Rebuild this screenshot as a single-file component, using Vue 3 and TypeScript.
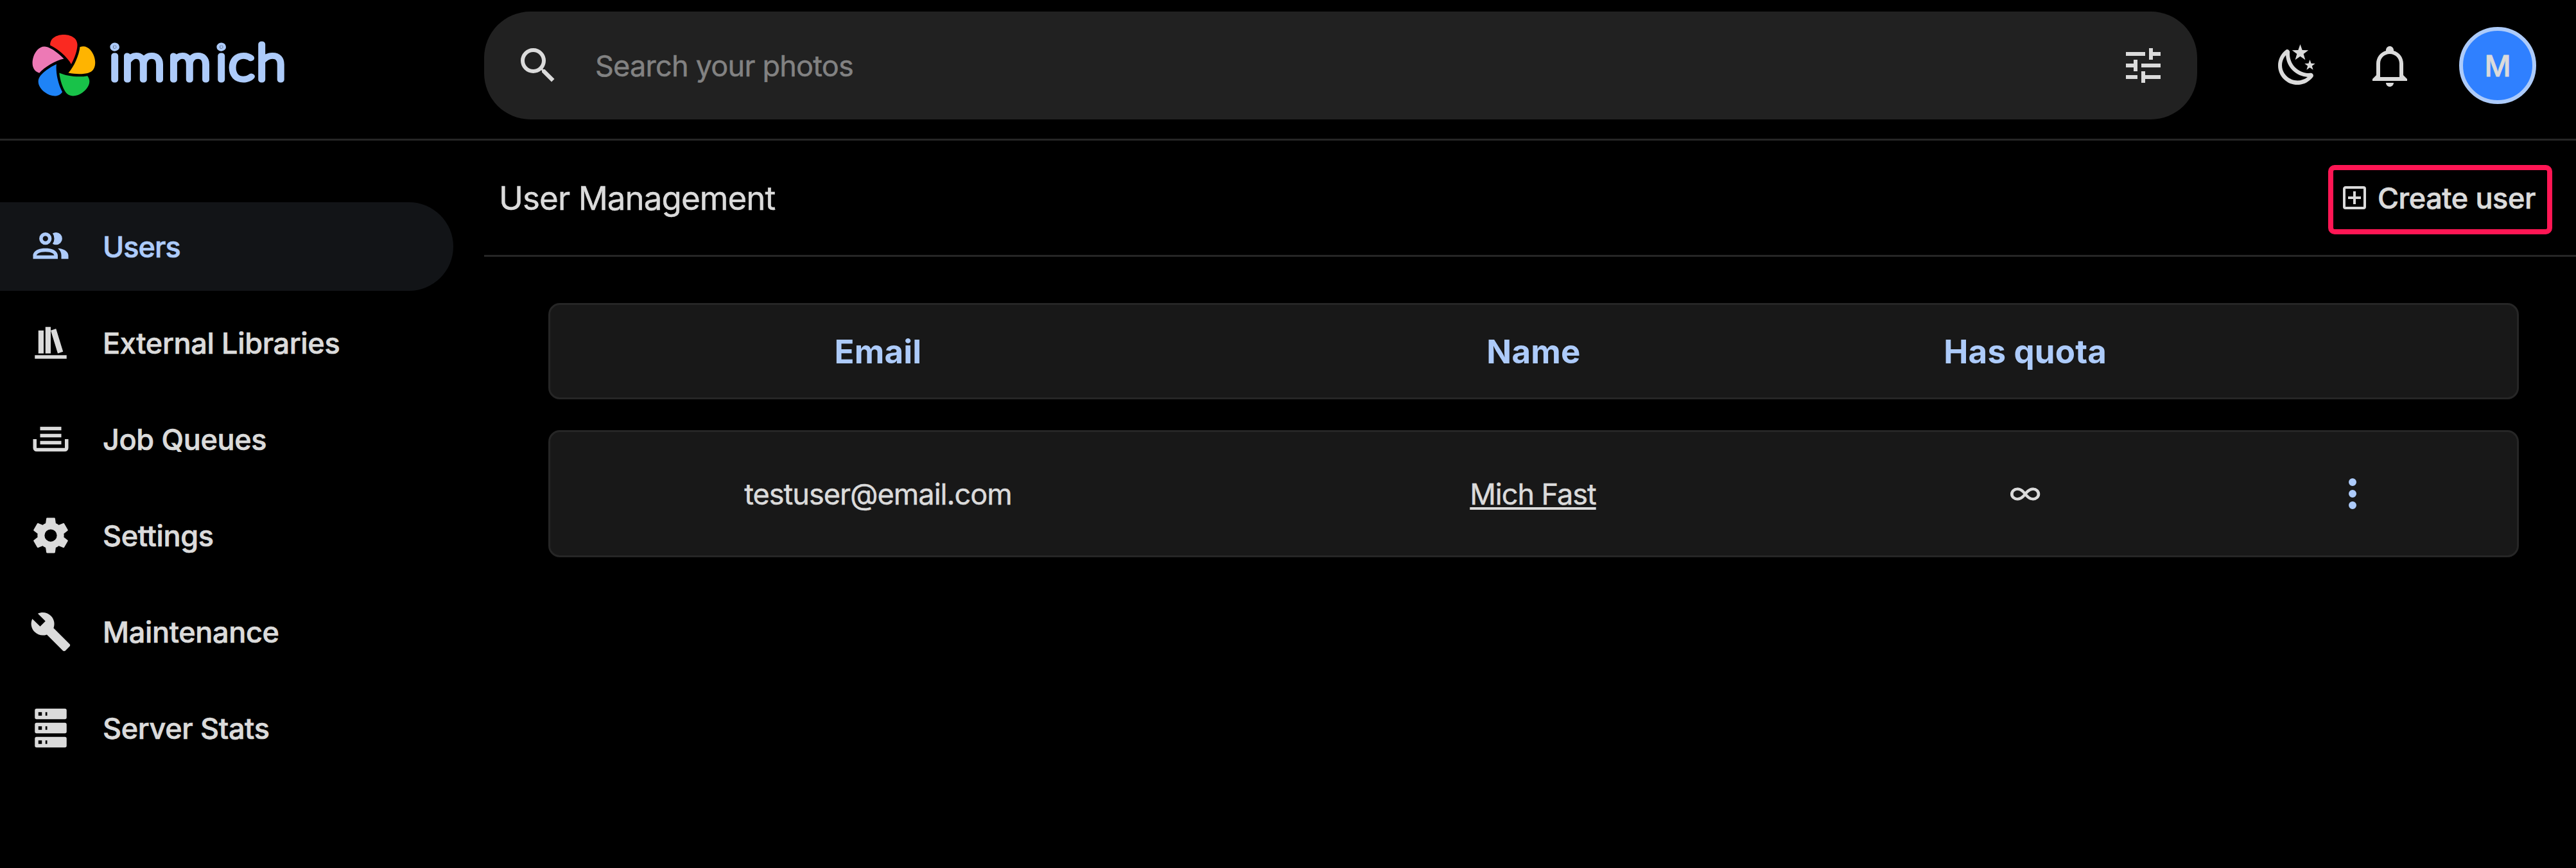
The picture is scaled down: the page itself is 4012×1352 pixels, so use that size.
<script setup lang="ts">
interface NavItem {
  label: string
  icon: string
  active?: boolean
}

interface UserRow {
  email: string
  name: string
  quota: string
}

const icons = {
  magnify:
    'M9.5,3A6.5,6.5 0 0,1 16,9.5C16,11.11 15.41,12.59 14.44,13.73L14.71,14H15.5L20.5,19L19,20.5L14,15.5V14.71L13.73,14.44C12.59,15.41 11.11,16 9.5,16A6.5,6.5 0 0,1 3,9.5A6.5,6.5 0 0,1 9.5,3M9.5,5C7,5 5,7 5,9.5C5,12 7,14 9.5,14C12,14 14,12 14,9.5C14,7 12,5 9.5,5Z',
  tune: 'M3,17V19H9V17H3M3,5V7H13V5H3M13,21V19H21V17H13V15H11V21H13M7,9V11H3V13H7V15H9V9H7M21,13V11H11V13H21M15,9H17V7H21V5H17V3H15V9Z',
  night:
    'M17.75,4.09L15.22,6.03L16.13,9.09L13.5,7.28L10.87,9.09L11.78,6.03L9.25,4.09L12.44,4L13.5,1L14.56,4L17.75,4.09M21.25,11L19.61,12.25L20.2,14.23L18.5,13.06L16.8,14.23L17.39,12.25L15.75,11L17.81,10.95L18.5,9L19.19,10.95L21.25,11M18.97,15.95C19.8,15.87 20.69,17.05 20.16,17.8C19.84,18.25 19.5,18.67 19.08,19.07C15.17,23 8.84,23 4.94,19.07C1.03,15.17 1.03,8.83 4.94,4.93C5.34,4.53 5.76,4.17 6.21,3.85C6.96,3.32 8.14,4.21 8.06,5.04C7.79,7.9 8.75,10.87 10.95,13.06C13.14,15.26 16.1,16.22 18.97,15.95M17.33,17.97C14.5,17.81 11.7,16.64 9.53,14.5C7.36,12.31 6.2,9.5 6.04,6.68C3.23,9.82 3.34,14.4 6.35,17.41C9.37,20.43 14,20.54 17.33,17.97Z',
  bell: 'M10 21H14C14 22.1 13.1 23 12 23S10 22.1 10 21M21 19V20H3V19L5 17V11C5 7.9 7 5.2 10 4.3V4C10 2.9 10.9 2 12 2S14 2.9 14 4V4.3C17 5.2 19 7.9 19 11V17L21 19M17 11C17 8.2 14.8 6 12 6S7 8.2 7 11V18H17V11Z',
  plusBox:
    'M19,19V5H5V19H19M19,3A2,2 0 0,1 21,5V19A2,2 0 0,1 19,21H5A2,2 0 0,1 3,19V5C3,3.89 3.9,3 5,3H19M11,7H13V11H17V13H13V17H11V13H7V11H11V7Z',
  dots: 'M12,16A2,2 0 0,1 14,18A2,2 0 0,1 12,20A2,2 0 0,1 10,18A2,2 0 0,1 12,16M12,10A2,2 0 0,1 14,12A2,2 0 0,1 12,14A2,2 0 0,1 10,12A2,2 0 0,1 12,10M12,4A2,2 0 0,1 14,6A2,2 0 0,1 12,8A2,2 0 0,1 10,6A2,2 0 0,1 12,4Z',
}

const navItems: NavItem[] = [
  {
    label: 'Users',
    active: true,
    icon: 'M13.07 10.41A5 5 0 0 0 13.07 4.59A3.39 3.39 0 0 1 15 4A3.5 3.5 0 0 1 15 11A3.39 3.39 0 0 1 13.07 10.41M5.5 7.5A3.5 3.5 0 1 1 9 11A3.5 3.5 0 0 1 5.5 7.5M7.5 7.5A1.5 1.5 0 1 0 9 6A1.5 1.5 0 0 0 7.5 7.5M16 17V19H2V17S2 13 9 13 16 17 16 17M14 17C13.86 16.22 12.67 15 9 15S4.07 16.31 4 17M15.95 13A5.32 5.32 0 0 1 18 17V19H22V17S22 13.37 15.94 13Z',
  },
  {
    label: 'External Libraries',
    icon: 'M9 3V18H12V3H9M12 5L16 18L19 17L15 4L12 5M5 5V18H8V5H5M3 19V21H21V19H3Z',
  },
  {
    label: 'Job Queues',
    icon: 'M18 5H6V7H18M6 9H18V11H6M2 12H4V17H20V12H22V17A2 2 0 0 1 20 19H4A2 2 0 0 1 2 17M18 13H6V15H18Z',
  },
  {
    label: 'Settings',
    icon: 'M12,15.5A3.5,3.5 0 0,1 8.5,12A3.5,3.5 0 0,1 12,8.5A3.5,3.5 0 0,1 15.5,12A3.5,3.5 0 0,1 12,15.5M19.43,12.97C19.47,12.65 19.5,12.33 19.5,12C19.5,11.67 19.47,11.34 19.43,11L21.54,9.37C21.73,9.22 21.78,8.95 21.66,8.73L19.66,5.27C19.54,5.05 19.27,4.96 19.05,5.05L16.56,6.05C16.04,5.66 15.5,5.32 14.87,5.07L14.5,2.42C14.46,2.18 14.25,2 14,2H10C9.75,2 9.54,2.18 9.5,2.42L9.13,5.07C8.5,5.32 7.96,5.66 7.44,6.05L4.95,5.05C4.73,4.96 4.46,5.05 4.34,5.27L2.34,8.73C2.21,8.95 2.27,9.22 2.46,9.37L4.57,11C4.53,11.34 4.5,11.67 4.5,12C4.5,12.33 4.53,12.65 4.57,12.97L2.46,14.63C2.27,14.78 2.21,15.05 2.34,15.27L4.34,18.73C4.46,18.95 4.73,19.03 4.95,18.95L7.44,17.94C7.96,18.34 8.5,18.68 9.13,18.93L9.5,21.58C9.54,21.82 9.75,22 10,22H14C14.25,22 14.46,21.82 14.5,21.58L14.87,18.93C15.5,18.67 16.04,18.34 16.56,17.94L19.05,18.95C19.27,19.03 19.54,18.95 19.66,18.73L21.66,15.27C21.78,15.05 21.73,14.78 21.54,14.63L19.43,12.97Z',
  },
  {
    label: 'Maintenance',
    icon: 'M22.7,19L13.6,9.9C14.5,7.6 14,4.9 12.1,3C10.1,1 7.1,0.6 4.7,1.7L9,6L6,9L1.6,4.7C0.4,7.1 0.9,10.1 2.9,12.1C4.8,14 7.5,14.5 9.8,13.6L18.9,22.7C19.3,23.1 19.9,23.1 20.3,22.7L22.6,20.4C23.1,20 23.1,19.3 22.7,19Z',
  },
  {
    label: 'Server Stats',
    icon: 'M4,1H20A1,1 0 0,1 21,2V6A1,1 0 0,1 20,7H4A1,1 0 0,1 3,6V2A1,1 0 0,1 4,1M4,9H20A1,1 0 0,1 21,10V14A1,1 0 0,1 20,15H4A1,1 0 0,1 3,14V10A1,1 0 0,1 4,9M4,17H20A1,1 0 0,1 21,18V22A1,1 0 0,1 20,23H4A1,1 0 0,1 3,22V18A1,1 0 0,1 4,17M9,5H10V3H9V5M9,13H10V11H9V13M9,21H10V19H9V21M5,3V5H7V3H5M5,11V13H7V11H5M5,19V21H7V19H5Z',
  },
]

const users: UserRow[] = [{ email: 'testuser@email.com', name: 'Mich Fast', quota: '∞' }]
</script>

<template>
  <div class="page">
    <header class="topbar">
      <div class="brand">
        <svg class="mark" viewBox="99 95 594 586">
          <path fill="#fa2921" d="M375.48,267.63c38.64,34.21,69.78,70.87,89.82,105.42,34.42-61.56,57.42-134.71,57.71-181.3,0-.33,0-.63,0-.91,0-68.94-68.77-95.77-128.01-95.77s-128.01,26.83-128.01,95.77c0,.94,0,2.2,0,3.72,32.97,14.78,72.11,41.01,108.49,73.07Z" />
          <path fill="#ed79b5" d="M164.7,455.63c24.15-26.87,61.2-55.99,103.01-80.61,44.48-26.18,88.97-44.47,128.02-52.84-47.91-51.76-110.37-96.24-154.6-110.91-.31-.1-.6-.19-.86-.28-65.57-21.3-112.34,35.81-130.64,92.15-18.3,56.34-14.04,130.04,51.53,151.34,.89,.29,2.09,.68,3.54,1.15Z" />
          <path fill="#ffb400" d="M681.07,302.19c-18.3-56.34-65.07-113.45-130.64-92.15-.9,.29-2.1,.68-3.54,1.15-3.75,35.93-16.6,81.27-35.96,125.76-20.59,47.32-45.84,88.27-72.51,118,69.18,13.72,145.86,12.98,190.26-1.14,.31-.1,.6-.2,.86-.28,65.57-21.3,69.83-95,51.53-151.34Z" />
          <path fill="#1e83f7" d="M336.54,510.71c-11.15-50.39-14.8-98.36-10.7-138.08-64.03,29.57-125.63,75.23-153.26,112.76-.19,.26-.37,.51-.53,.73-40.52,55.78-.66,117.91,47.27,152.72,47.92,34.82,119.33,53.54,159.86-2.24,.56-.76,1.3-1.78,2.19-3.01-18.09-31.31-34.02-75.79-44.83-122.88Z" />
          <path fill="#18c249" d="M617.57,482.52c-35.33,7.54-82.42,9.33-130.72,4.66-51.37-4.96-98.11-16.32-134.63-32.5,8.33,70.03,32.73,142.73,59.88,180.6,.19,.26,.37,.51,.53,.73,40.52,55.78,111.93,37.06,159.86,2.24,47.92-34.82,87.79-96.95,47.27-152.72-.56-.76-1.3-1.78-2.19-3.01Z" />
        </svg>
        <svg class="wordmark" viewBox="0 0 290 120">
          <text transform="scale(1.1 1)" x="-0.9 17.6 83 150.1 168.7 207.8" y="82.2">immich</text>
        </svg>
      </div>

      <div class="search">
        <svg class="icon" viewBox="0 0 24 24"><path :d="icons.magnify" /></svg>
        <span class="placeholder">Search your photos</span>
        <svg class="icon" viewBox="0 0 24 24"><path :d="icons.tune" /></svg>
      </div>

      <div class="actions">
        <svg class="icon" viewBox="0 0 24 24"><path :d="icons.night" /></svg>
        <svg class="icon" viewBox="0 0 24 24"><path :d="icons.bell" /></svg>
        <div class="avatar">M</div>
      </div>
    </header>

    <div class="body">
      <nav class="sidebar">
        <a v-for="item in navItems" :key="item.label" class="nav-item" :class="{ active: item.active }">
          <svg class="nav-icon" viewBox="0 0 24 24"><path :d="item.icon" /></svg>
          <span>{{ item.label }}</span>
        </a>
      </nav>

      <main class="content">
        <div class="titlebar">
          <h1>User Management</h1>
          <button class="create" type="button">
            <svg viewBox="0 0 24 24"><path :d="icons.plusBox" /></svg>
            <span>Create user</span>
          </button>
        </div>

        <section class="table">
          <div class="row head">
            <div class="wide">Email</div>
            <div class="wide">Name</div>
            <div class="narrow">Has quota</div>
            <div class="narrow"></div>
          </div>
          <div v-for="user in users" :key="user.email" class="row">
            <div class="wide"><span class="email">{{ user.email }}</span></div>
            <div class="wide"><a class="name">{{ user.name }}</a></div>
            <div class="narrow"><span class="quota">{{ user.quota }}</span></div>
            <div class="narrow"><svg class="icon menu" viewBox="0 0 24 24"><path :d="icons.dots" /></svg></div>
          </div>
        </section>
      </main>
    </div>
  </div>
</template>

<style>
body {
  background: #000;
}
</style>

<style scoped>
.page {
  width: 4012px;
  height: 1352px;
  overflow: hidden;
  background: #000;
  color: #dbdbdb;
  font-family: Inter, 'Liberation Sans', sans-serif;
  font-size: 45px;
  -webkit-text-stroke-width: 0.5px;
  box-sizing: border-box;
}
.page * {
  box-sizing: border-box;
}
svg {
  display: block;
  flex: none;
  fill: currentColor;
}
.icon {
  width: 72px;
  height: 72px;
}

.topbar {
  display: flex;
  height: 219px;
  padding: 18px 62px 30px 0;
  border-bottom: 3px solid #262626;
}
.brand {
  display: flex;
  align-items: center;
  width: 754px;
  height: 168px;
  padding-left: 50px;
}
.mark {
  width: 99px;
  height: 97px;
}
.wordmark {
  width: 290px;
  height: 120px;
  margin-left: 22px;
  overflow: visible;
}
.wordmark text {
  font-family: Lato, sans-serif;
  font-size: 76px;
  font-weight: 100;
  fill: #adcbfa;
  stroke: #adcbfa;
  stroke-width: 9px;
  stroke-linejoin: round;
}
.search {
  display: flex;
  align-items: center;
  width: 2668px;
  height: 168px;
  padding: 0 48px;
  border-radius: 72px;
  background: #212121;
}
.placeholder {
  flex: 1;
  margin-left: 53px;
  color: #828282;
  letter-spacing: -0.76px;
}
.actions {
  display: flex;
  align-items: center;
  gap: 72px;
  height: 168px;
  margin-left: auto;
}
.avatar {
  display: flex;
  align-items: center;
  justify-content: center;
  width: 120px;
  height: 120px;
  border: 6px solid #adcbfa;
  border-radius: 50%;
  background: #2f80ff;
  font-weight: 500;
  -webkit-text-stroke-width: 0.8px;
}

.body {
  display: flex;
}
.sidebar {
  display: flex;
  flex-direction: column;
  gap: 12px;
  width: 706px;
  margin-right: 48px;
  padding-top: 96px;
}
.nav-item {
  display: flex;
  align-items: center;
  gap: 48px;
  height: 138px;
  padding-left: 46px;
  border-radius: 0 69px 69px 0;
  font-weight: 500;
  letter-spacing: -0.35px;
  -webkit-text-stroke-width: 0.7px;
}
.nav-item.active {
  background: #121417;
  color: #adcbfa;
  letter-spacing: -1px;
}
.nav-icon {
  width: 66px;
  height: 66px;
}

.content {
  flex: 1;
}
.titlebar {
  display: flex;
  align-items: center;
  justify-content: space-between;
  height: 181px;
  padding: 0 63px 0 23px;
  border-bottom: 3px solid #262626;
}
h1 {
  margin: 0;
  font-size: 51px;
  font-weight: 400;
  letter-spacing: -0.9px;
}
.create {
  position: relative;
  display: flex;
  align-items: center;
  gap: 12px;
  height: 48px;
  padding: 0;
  border: 0;
  background: none;
  color: inherit;
  font: inherit;
  font-weight: 500;
  letter-spacing: -0.4px;
  -webkit-text-stroke-width: 0.7px;
}
.create svg {
  width: 48px;
  height: 48px;
}
/* Highlight frame drawn around the button */
.create::after {
  content: '';
  position: absolute;
  inset: -27px -26px -33px -17px;
  border: 8px solid #ff1654;
  border-radius: 10px;
}

.table {
  display: flex;
  flex-direction: column;
  gap: 48px;
  padding: 72px 89px 0 100px;
}
.row {
  display: flex;
  align-items: center;
  height: 198px;
  border: 3px solid #262626;
  border-radius: 18px;
  background: #181818;
}
.row.head {
  height: 150px;
  color: #adcbfa;
  font-size: 51px;
  font-weight: 700;
  letter-spacing: 0.2px;
  -webkit-text-stroke-width: 0;
}
.wide,
.narrow {
  display: flex;
  align-items: center;
  justify-content: center;
}
.wide {
  width: 33.3333%;
}
.narrow {
  width: 16.6667%;
}
.email {
  letter-spacing: -0.95px;
}
.name {
  margin-right: 2px;
  letter-spacing: -1.03px;
  text-decoration: underline;
  text-decoration-thickness: 4px;
  text-underline-offset: 4px;
}
.quota {
  margin-bottom: 4px;
  font-size: 56px;
  font-weight: 300;
  line-height: 1;
  -webkit-text-stroke-width: 1px;
  transform: scaleY(0.9);
}
.menu {
  margin-right: 2px;
  color: #adcbfa;
}
</style>
